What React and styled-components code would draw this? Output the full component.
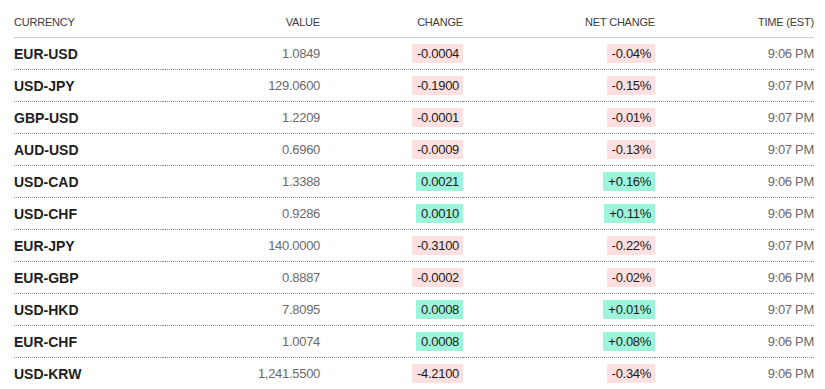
import React from 'react';
import styled, { createGlobalStyle } from 'styled-components';

const GlobalStyle = createGlobalStyle`
  body {
    margin: 0;
    background: #fff;
    font-family: "Liberation Sans", Arial, sans-serif;
  }
`;

const Wrapper = styled.div`
  padding: 6px 11px 0 14px;
`;

const Grid = styled.div`
  display: grid;
  grid-template-columns: 149px 157px 143px 192px 159px;
`;

const HeadCell = styled.div`
  height: 31px;
  display: flex;
  align-items: center;
  justify-content: ${({ left }) => (left ? 'flex-start' : 'flex-end')};
  border-bottom: 1px solid #cdcdcd;
  font-size: 11px;
  color: #3c3c3c;
  text-transform: uppercase;
  letter-spacing: -0.2px;
`;

const Cell = styled.div`
  height: 31px;
  display: flex;
  align-items: center;
  justify-content: ${({ left }) => (left ? 'flex-start' : 'flex-end')};
  border-bottom: 1px dotted #8a8a8a;
  font-size: 13px;
  color: #6a6a6a;
  letter-spacing: -0.3px;
`;

const Pair = styled.span`
  font-size: 14px;
  font-weight: bold;
  color: #1e1e1e;
  letter-spacing: 0;
`;

const Badge = styled.span`
  display: inline-block;
  padding: 2px 4px 2px 5px;
  line-height: 15px;
  color: #1a1a1a;
  background: ${({ up }) => (up ? '#9ef4db' : '#ffe0e0')};
`;

const rows = [
  ['EUR-USD', '1.0849', '-0.0004', '-0.04%', '9:06 PM'],
  ['USD-JPY', '129.0600', '-0.1900', '-0.15%', '9:07 PM'],
  ['GBP-USD', '1.2209', '-0.0001', '-0.01%', '9:07 PM'],
  ['AUD-USD', '0.6960', '-0.0009', '-0.13%', '9:07 PM'],
  ['USD-CAD', '1.3388', '0.0021', '+0.16%', '9:06 PM'],
  ['USD-CHF', '0.9286', '0.0010', '+0.11%', '9:06 PM'],
  ['EUR-JPY', '140.0000', '-0.3100', '-0.22%', '9:07 PM'],
  ['EUR-GBP', '0.8887', '-0.0002', '-0.02%', '9:06 PM'],
  ['USD-HKD', '7.8095', '0.0008', '+0.01%', '9:07 PM'],
  ['EUR-CHF', '1.0074', '0.0008', '+0.08%', '9:06 PM'],
  ['USD-KRW', '1,241.5500', '-4.2100', '-0.34%', '9:06 PM'],
];

export default function App() {
  return (
    <Wrapper>
      <GlobalStyle />
      <Grid>
        <HeadCell left>Currency</HeadCell>
        <HeadCell>Value</HeadCell>
        <HeadCell>Change</HeadCell>
        <HeadCell>Net Change</HeadCell>
        <HeadCell>Time (EST)</HeadCell>
        {rows.map(([pair, value, change, net, time]) => {
          const up = !change.startsWith('-');
          return (
            <React.Fragment key={pair}>
              <Cell left>
                <Pair>{pair}</Pair>
              </Cell>
              <Cell>{value}</Cell>
              <Cell>
                <Badge up={up}>{change}</Badge>
              </Cell>
              <Cell>
                <Badge up={up}>{net}</Badge>
              </Cell>
              <Cell>{time}</Cell>
            </React.Fragment>
          );
        })}
      </Grid>
    </Wrapper>
  );
}
